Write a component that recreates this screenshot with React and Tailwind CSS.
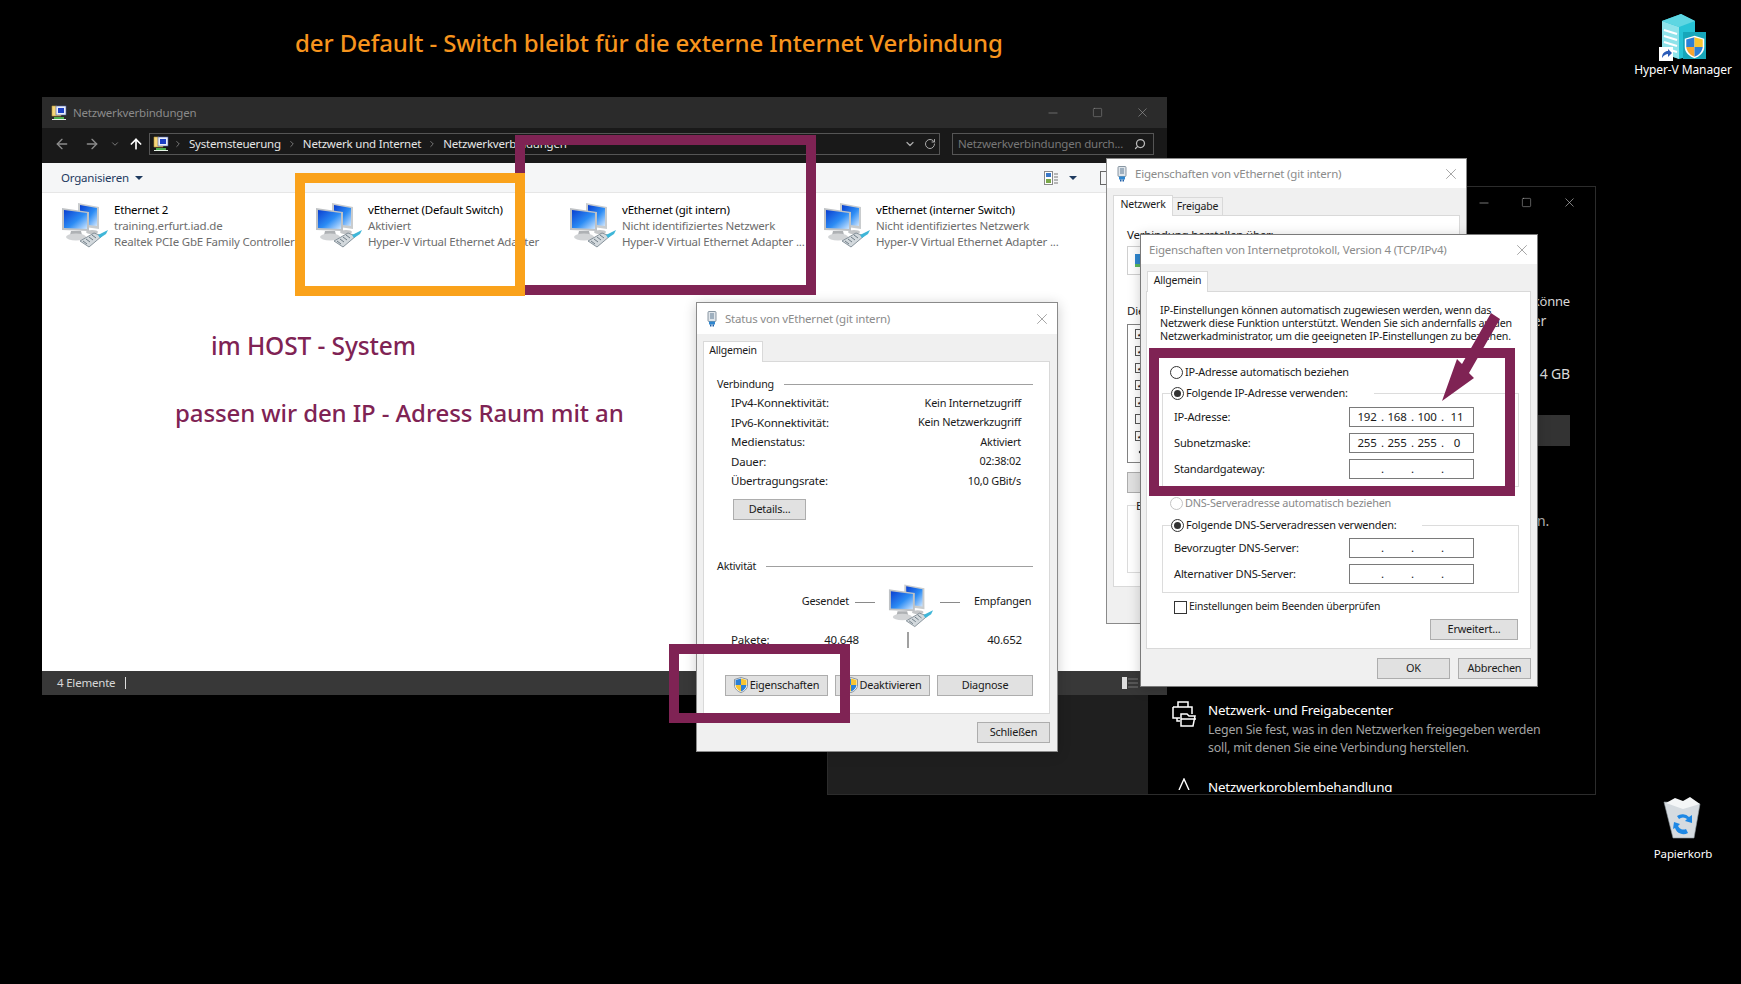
import { ArrowLeft, ArrowRight, ArrowUp, ChevronDown, ChevronLeft, ChevronRight, Minus, RotateCw, Search, Square, X } from "lucide-react";

function NetIcon({ className }) {
  return (
    <svg viewBox="0 0 48 46" className={className}>
      <defs>
        <linearGradient id="scr" x1="0" y1="0" x2="1" y2="1">
          <stop offset="0" stopColor="#0a3fd0" />
          <stop offset="0.55" stopColor="#2c8cf4" />
          <stop offset="1" stopColor="#cfe6ff" />
        </linearGradient>
      </defs>
      <path d="M17 1 L38 5 L38 27 L17 24 Z" fill="#c9ccce" />
      <path d="M19 3 L36 6 L36 24 L19 22 Z" fill="url(#scr)" />
      <ellipse cx="31" cy="30" rx="6" ry="2" fill="#c4c6c8" />
      <path d="M1 6 L28 10 L28 29 L1 28 Z" fill="#bfc2c5" />
      <path d="M3 8 L26 11 L26 27 L3 26 Z" fill="url(#scr)" />
      <path d="M10 29 L20 29 L21 33 L9 33 Z" fill="#aeb1b4" />
      <ellipse cx="15" cy="35" rx="10" ry="3.5" fill="#d2d4d6" />
      <path d="M19 39 L33 31 L41 34 L28 45 Z" fill="#d3d9dd" stroke="#6f7c86" strokeWidth="0.8" />
      <path d="M22 39 L26 42 M25 37 L29 40 M28 35 L32 38 M31 33 L35 36" stroke="#6f7c86" strokeWidth="1" />
      <path d="M37 33 L47 28 L45 32 L39 36 Z" fill="#3fb6d8" />
    </svg>
  );
}

function FolderNet({ className }) {
  return (
    <svg viewBox="0 0 16 16" className={className}>
      <path d="M1 1 H6 L7 3 H10 V11 H1 Z" fill="#f5d67a" stroke="#b89a3e" strokeWidth="0.6" />
      <rect x="5" y="1" width="10" height="9" fill="#e8eefc" stroke="#4a5a9c" strokeWidth="0.6" />
      <rect x="7" y="3" width="6" height="5" fill="#1c3fc4" />
      <path d="M3 12 H13 V14 H3 Z" fill="#4fb04f" />
      <path d="M1 14 H15 V15 H1 Z" fill="#e8f3e8" />
    </svg>
  );
}

function Plug({ className }) {
  return (
    <svg viewBox="0 0 10 16" className={className}>
      <rect x="1" y="0.5" width="8" height="10" rx="1" fill="#dfe5ea" stroke="#6f7f8e" strokeWidth="0.8" />
      <rect x="3" y="2" width="4" height="6" fill="#9fb0bf" />
      <rect x="2" y="10.5" width="6" height="3" fill="#2f87d0" />
      <rect x="3" y="13.5" width="1.5" height="2" fill="#1f5fa8" />
      <rect x="5.5" y="13.5" width="1.5" height="2" fill="#1f5fa8" />
    </svg>
  );
}

function Shield({ className }) {
  return (
    <svg viewBox="0 0 14 16" className={className}>
      <path d="M7 0.5 L13.5 2.5 V8 C13.5 12 10 14.5 7 15.5 C4 14.5 0.5 12 0.5 8 V2.5 Z" fill="#fff" stroke="#5d6b78" strokeWidth="0.7" />
      <path d="M7 1.5 V8 H1.5 V3 Z" fill="#2b7fd6" />
      <path d="M7 1.5 L12.5 3 V8 H7 Z" fill="#f7c531" />
      <path d="M1.5 8 H7 V14.5 C4 13.5 2 11 1.5 8 Z" fill="#f7c531" />
      <path d="M7 8 H12.5 C12 11 10 13.5 7 14.5 Z" fill="#2b7fd6" />
    </svg>
  );
}

function Btn({ className = "", children }) {
  return (
    <div className={`flex h-[21px] items-center justify-center border border-[#adadad] bg-[#e1e1e1] text-[10.9px] text-[#1a1a1a] ${className}`}>
      {children}
    </div>
  );
}

function Tab({ className = "", children }) {
  return (
    <div className={`z-10 -mb-px flex items-center justify-center border border-b-0 border-[#d9d9d9] bg-white text-[10.5px] text-[#1a1a1a] ${className}`}>
      {children}
    </div>
  );
}

function TitleBar({ icon, title, className = "h-[31px]", titleClass = "" }) {
  return (
    <div className={`flex shrink-0 items-center bg-white pr-[6px] pl-[10px] ${className}`}>
      {icon}
      <span className={`text-[#8b8b8b] ${titleClass}`}>{title}</span>
      <X className="ml-auto text-[#8a8a8a]" size={18} strokeWidth={1} />
    </div>
  );
}

function Section({ label }) {
  return (
    <div className="flex h-[18px] items-center gap-[10px] text-[10.7px] text-[#1a1a1a]">
      {label}
      <div className="h-px flex-1 bg-[#a0a0a0]" />
    </div>
  );
}

function Row({ label, value }) {
  return (
    <div className="flex h-[19.5px] items-center justify-between text-[#1a1a1a]">
      <span>{label}</span>
      <span className="text-[10.9px]">{value}</span>
    </div>
  );
}

function Radio({ on, off, label }) {
  return (
    <div className={`flex h-[14px] items-center gap-[2px] bg-white text-[10.9px] ${off ? "text-[#8a8a8a]" : "text-[#1a1a1a]"}`}>
      <div className={`flex size-[13px] items-center justify-center rounded-full border ${off ? "border-[#c4c4c4]" : "border-[#333]"}`}>
        {on && <div className="size-[7px] rounded-full bg-[#333]" />}
      </div>
      {label}
    </div>
  );
}

function IpField({ label, parts = ["", "", "", ""] }) {
  return (
    <div className="flex h-[20px] items-center text-[#1a1a1a]">
      <span className="w-[186px] pl-[11px] text-[11.1px]">{label}</span>
      <div className="flex h-[20px] w-[125px] items-center border border-[#7a7a7a] bg-white pl-[3px]">
        {parts.map((p, i) => (
          <div key={i} className="flex w-[30px]">
            <span className="w-[28px] text-center">{p}</span>
            {i < 3 && <span className="w-[2px]">.</span>}
          </div>
        ))}
      </div>
    </div>
  );
}

function GroupBox({ className = "", legend, children }) {
  return (
    <div className={`relative ml-[15px] w-[357px] border border-[#dcdcdc] ${className}`}>
      <div className="absolute -top-[8px] left-[8px] bg-white pr-[26px]">{legend}</div>
      {children}
    </div>
  );
}

function SettingsWindow() {
  return (
    <div className="absolute top-[186px] left-[827px] flex h-[609px] w-[769px] border border-[#2c2c2c] bg-black text-white">
      <div className="w-[320px] bg-[#1f1f1f]" />
      <div className="flex flex-1 flex-col">
        <div className="flex h-[31px] items-center justify-end gap-[30px] pr-[18px] text-[#c8c8c8]">
          <Minus size={14} strokeWidth={1} />
          <Square size={11} strokeWidth={1} />
          <X size={15} strokeWidth={1} />
        </div>
        <div className="flex w-[422px] flex-col items-end text-[14px] text-[#d8d8d8]">
          <div className="mt-[74px] text-[13px] leading-[19px]">könne</div>
          <div className="mr-[24px] leading-[19px]">er</div>
          <div className="mt-[34px] leading-[19px]">4 GB</div>
          <div className="mt-[32px] h-[31px] w-[60px] bg-[#333333]" />
          <div className="mt-[65px] mr-[21px] leading-[19px] text-[#b5b5b5]">n.</div>
        </div>
        <div className="mt-[171px] flex gap-[12px] pl-[24px]">
          <svg viewBox="0 0 24 26" className="h-[26px] w-[24px] shrink-0" fill="none" stroke="#fff" strokeWidth="1.5">
            <path d="M6 6 V1 H16 V6 M1 6 H20 V13 M1 6 V17 H8 M5 17 V20 H8 M9 13 H15 L17 15 H23 L21 25 H9 Z M9 18 H24" />
          </svg>
          <div>
            <div className="text-[13.4px] leading-[18px]">Netzwerk- und Freigabecenter</div>
            <div className="mt-[2px] w-[345px] text-[12.4px] leading-[18px] text-[#a3a3a3]">
              Legen Sie fest, was in den Netzwerken freigegeben werden soll, mit denen Sie eine Verbindung herstellen.
            </div>
          </div>
        </div>
        <div className="mt-[21px] flex h-[14px] gap-[18px] overflow-hidden pl-[30px] text-[13.4px] leading-[18px]">
          <svg viewBox="0 0 12 12" className="size-[12px] shrink-0" fill="none" stroke="#fff" strokeWidth="1.4">
            <path d="M1 12 L6 1 L11 12" />
          </svg>
          Netzwerkproblembehandlung
        </div>
      </div>
    </div>
  );
}

const adapters = [
  ["Ethernet 2", "training.erfurt.iad.de", "Realtek PCIe GbE Family Controller"],
  ["vEthernet (Default Switch)", "Aktiviert", "Hyper-V Virtual Ethernet Adapter"],
  ["vEthernet (git intern)", "Nicht identifiziertes Netzwerk", "Hyper-V Virtual Ethernet Adapter ..."],
  ["vEthernet (interner Switch)", "Nicht identifiziertes Netzwerk", "Hyper-V Virtual Ethernet Adapter ..."],
];

function Explorer() {
  return (
    <div className="absolute top-[97px] left-[42px] flex h-[598px] w-[1125px] flex-col bg-white">
      <div className="flex h-[31px] items-center bg-[#2b2b2b] pr-[17px] pl-[9px] text-[#8a8a8a]">
        <FolderNet className="mr-[6px] size-[16px]" />
        Netzwerkverbindungen
        <div className="ml-auto flex items-center gap-[32px] text-[#9a9a9a]">
          <Minus size={14} strokeWidth={1} />
          <Square size={11} strokeWidth={1} />
          <X size={15} strokeWidth={1} />
        </div>
      </div>
      <div className="flex h-[35px] items-center bg-[#191919] pr-[13px] pb-[3px]">
        <div className="flex w-[107px] items-center pl-[12px] text-[#8c8c8c]">
          <ArrowLeft size={16} strokeWidth={2} />
          <ArrowRight className="ml-[14px]" size={16} strokeWidth={2} />
          <ChevronDown className="ml-[10px]" size={10} strokeWidth={2} />
          <ArrowUp className="ml-[8px] text-white" size={16} strokeWidth={2.5} />
        </div>
        <div className="flex h-[22px] w-[791px] items-center border border-[#555] pr-[3px] pl-[3px] text-[#e6e6e6]">
          <FolderNet className="size-[16px]" />
          <ChevronRight className="mr-[6px] ml-[4px] text-[#888]" size={10} />
          Systemsteuerung
          <ChevronRight className="mx-[6px] text-[#888]" size={10} />
          Netzwerk und Internet
          <ChevronRight className="mx-[6px] text-[#888]" size={10} />
          Netzwerkverbindungen
          <ChevronDown className="ml-auto text-[#aaa]" size={12} strokeWidth={2.5} />
          <RotateCw className="ml-[8px] text-[#aaa]" size={12} />
        </div>
        <div className="ml-[12px] flex h-[22px] flex-1 items-center justify-between border border-[#555] pr-[7px] pl-[5px] text-[#777]">
          Netzwerkverbindungen durch...
          <Search className="-scale-x-100 text-[#bbb]" size={12} strokeWidth={2.5} />
        </div>
      </div>
      <div className="flex h-[30px] items-center border-b border-[#e6e6e6] bg-[#f5f6f7] pr-[53px] pl-[19px] text-[#1e3a5f]">
        Organisieren
        <div className="ml-[6px] size-0 border-x-[4px] border-t-[4px] border-x-transparent border-t-[#1e3a5f]" />
        <svg viewBox="0 0 14 14" className="ml-auto size-[14px]">
          <rect x="0.5" y="0.5" width="8" height="13" fill="#fff" stroke="#8a8a8a" />
          <rect x="2" y="2" width="5" height="4" fill="#3a78c8" />
          <rect x="2" y="8" width="5" height="4" fill="#7aa84a" />
          <path d="M10 3 H14 M10 6 H14 M10 9 H14 M10 12 H14" stroke="#777" />
        </svg>
        <div className="ml-[11px] size-0 border-x-[4px] border-t-[4px] border-x-transparent border-t-[#1e3a5f]" />
        <div className="ml-[23px] h-[14px] w-[14px] border border-[#666]" />
      </div>
      <div className="grid flex-1 grid-cols-[repeat(4,254px)] content-start pt-[9px] pl-[19px]">
        {adapters.map(([name, sub, dev]) => (
          <div key={name} className="flex">
            <NetIcon className="h-[46px] w-[48px] shrink-0" />
            <div className="ml-[5px] whitespace-nowrap leading-[16px] text-[#6d6d6d]">
              <div className="text-black">{name}</div>
              <div>{sub}</div>
              <div>{dev}</div>
            </div>
          </div>
        ))}
      </div>
      <div className="flex h-[24px] items-center bg-[#383838] pr-[29px] pl-[15px] text-[#d8d8d8]">
        4 Elemente
        <div className="ml-[10px] h-[12px] w-px bg-[#ddd]" />
        <svg viewBox="0 0 16 12" className="ml-auto h-[12px] w-[16px]">
          <rect x="0" y="0" width="5" height="12" fill="#ddd" />
          <path d="M6 2 H16 M6 6 H16 M6 10 H16" stroke="#777" />
        </svg>
      </div>
    </div>
  );
}

function PropsWindow() {
  return (
    <div className="absolute top-[158px] left-[1106px] flex h-[466px] w-[361px] flex-col border border-[#8a8a8a] bg-[#f0f0f0]">
      <TitleBar className="h-[29px]" icon={<Plug className="mr-[8px] h-[16px] w-[10px]" />} title="Eigenschaften von vEthernet (git intern)" />
      <div className="flex h-[27px] items-end pl-[6px]">
        <Tab className="h-[21px] w-[60px] pb-[3px]">Netzwerk</Tab>
        <div className="flex h-[18px] w-[50px] items-center justify-center border border-b-0 border-l-0 border-[#d9d9d9] text-[10.5px] text-[#1a1a1a]">Freigabe</div>
      </div>
      <div className="mx-[6px] h-[372px] border border-[#d9d9d9] bg-white px-[13px] text-[#1a1a1a]">
        <div className="mt-[11px] leading-[16px]">Verbindung herstellen über:</div>
        <div className="mt-[3px] flex h-[29px] w-[300px] items-center border border-[#d0d0d0] pl-[6px]">
          <svg viewBox="0 0 16 16" className="size-[16px]">
            <rect x="1" y="1" width="12" height="10" fill="#2f87d0" />
            <rect x="1" y="11" width="14" height="3" fill="#5cb85c" />
          </svg>
        </div>
        <div className="mt-[28px] leading-[16px]">Diese Verbindung verwendet folgende Elemente:</div>
        <div className="mt-[5px] flex h-[139px] w-[318px] flex-col gap-[7px] border border-[#828282] pt-[4px] pl-[7px]">
          {[1, 1, 1, 1, 1, 0, 1].map((on, i) => (
            <div key={i} className="flex size-[10px] items-center justify-center border border-[#555] text-[8px] leading-none font-bold">
              {on ? "✓" : ""}
            </div>
          ))}
          <ChevronLeft className="-mt-[2px]" size={12} strokeWidth={3} />
        </div>
        <Btn className="mt-[9px] w-[110px]">Installieren...</Btn>
        <div className="mt-[12px] h-[68px] w-[320px] border border-[#dcdcdc] pl-[8px]">
          <span className="relative -top-[9px] bg-white">Beschreibung</span>
        </div>
      </div>
    </div>
  );
}

function StatusDialog() {
  return (
    <div className="absolute top-[302px] left-[696px] flex h-[450px] w-[362px] flex-col border border-[#8a8a8a] bg-[#f0f0f0] shadow-[0_2px_12px_rgba(0,0,0,0.2)]">
      <TitleBar icon={<Plug className="mr-[8px] h-[16px] w-[10px]" />} title="Status von vEthernet (git intern)" />
      <div className="flex h-[27px] items-end pl-[6px]">
        <Tab className="h-[21px] w-[60px] pb-[3px]">Allgemein</Tab>
      </div>
      <div className="mx-[6px] h-[353px] w-[347px] border border-[#d9d9d9] bg-white pt-[13px] pr-[16px] pl-[13px] text-[#1a1a1a]">
        <Section label="Verbindung" />
        <div className="mr-[12px] ml-[14px]">
          <Row label="IPv4-Konnektivität:" value="Kein Internetzugriff" />
          <Row label="IPv6-Konnektivität:" value="Kein Netzwerkzugriff" />
          <Row label="Medienstatus:" value="Aktiviert" />
          <Row label="Dauer:" value="02:38:02" />
          <Row label="Übertragungsrate:" value="10,0 GBit/s" />
        </div>
        <Btn className="mt-[8px] ml-[16px] w-[73px]">Details...</Btn>
        <div className="mt-[38px]">
          <Section label="Aktivität" />
        </div>
        <div className="mt-[7px] flex h-[45px] items-start text-[10.9px]">
          <div className="mt-[10px] w-[132px] text-right leading-[16px]">Gesendet</div>
          <div className="mt-[19px] ml-[6px] h-px w-[20px] bg-[#8a8a8a]" />
          <NetIcon className="mr-[6px] ml-[13px] h-[45px] w-[46px]" />
          <div className="mt-[19px] h-px w-[20px] bg-[#8a8a8a]" />
          <div className="mt-[10px] ml-[14px] leading-[16px]">Empfangen</div>
        </div>
        <div className="mt-[4px] flex h-[16px] items-center">
          <div className="ml-[14px] flex w-[128px] justify-between">
            <span>Pakete:</span>
            <span>40.648</span>
          </div>
          <div className="ml-[48px] h-[16px] w-[2px] bg-[#a0a0a0]" />
          <div className="w-[113px] text-right">40.652</div>
        </div>
        <div className="mt-[27px] ml-[8px] flex gap-[7px]">
          <Btn className="w-[103px] gap-[2px]">
            <Shield className="h-[16px] w-[14px]" />
            Eigenschaften
          </Btn>
          <Btn className="w-[95px] gap-[2px]">
            <Shield className="h-[16px] w-[14px]" />
            Deaktivieren
          </Btn>
          <Btn className="w-[96px]">Diagnose</Btn>
        </div>
      </div>
      <div className="mt-[8px] mr-[7px] flex justify-end">
        <Btn className="w-[73px]">Schließen</Btn>
      </div>
    </div>
  );
}

function Ipv4Dialog() {
  return (
    <div className="absolute top-[234px] left-[1140px] flex h-[453px] w-[398px] flex-col border border-[#7a7a7a] bg-[#f0f0f0] shadow-[0_2px_12px_rgba(0,0,0,0.2)]">
      <TitleBar className="h-[29px]" title="Eigenschaften von Internetprotokoll, Version 4 (TCP/IPv4)" titleClass="-ml-[2px]" />
      <div className="flex h-[27px] items-end pl-[6px]">
        <Tab className="h-[21px] w-[61px] pb-[2px]">Allgemein</Tab>
      </div>
      <div className="mx-[5px] h-[358px] w-[385px] border border-[#d9d9d9] bg-white text-[#1a1a1a]">
        <div className="whitespace-nowrap pt-[12px] pl-[13px] text-[10.7px] leading-[13px]">
          <div>IP-Einstellungen können automatisch zugewiesen werden, wenn das</div>
          <div>Netzwerk diese Funktion unterstützt. Wenden Sie sich andernfalls an den</div>
          <div>Netzwerkadministrator, um die geeigneten IP-Einstellungen zu beziehen.</div>
        </div>
        <div className="mt-[22px] ml-[23px] w-fit">
          <Radio label="IP-Adresse automatisch beziehen" />
        </div>
        <GroupBox className="mt-[14px] flex flex-col gap-[6px] pt-[13px] pb-[7px]" legend={<Radio on label="Folgende IP-Adresse verwenden:" />}>
          <IpField label="IP-Adresse:" parts={["192", "168", "100", "11"]} />
          <IpField label="Subnetzmaske:" parts={["255", "255", "255", "0"]} />
          <IpField label="Standardgateway:" />
        </GroupBox>
        <div className="mt-[9px] ml-[23px] w-fit">
          <Radio off label="DNS-Serveradresse automatisch beziehen" />
        </div>
        <GroupBox className="mt-[15px] flex flex-col gap-[6px] pt-[12px] pb-[8px]" legend={<Radio on label="Folgende DNS-Serveradressen verwenden:" />}>
          <IpField label="Bevorzugter DNS-Server:" />
          <IpField label="Alternativer DNS-Server:" />
        </GroupBox>
        <div className="mt-[7px] ml-[27px] flex h-[14px] items-center gap-[2px] text-[10.4px]">
          <div className="size-[13px] border border-[#333]" />
          Einstellungen beim Beenden überprüfen
        </div>
        <div className="mt-[5px] mr-[12px] flex justify-end">
          <Btn className="w-[88px]">Erweitert...</Btn>
        </div>
      </div>
      <div className="mt-[9px] mr-[6px] flex justify-end gap-[8px]">
        <Btn className="w-[73px]">OK</Btn>
        <Btn className="w-[73px]">Abbrechen</Btn>
      </div>
    </div>
  );
}

function HyperVIcon() {
  return (
    <svg viewBox="0 0 48 48" className="size-[48px]">
      <path d="M3 8 L22 1 L36 8 L36 42 L20 46 L3 40 Z" fill="#27c3d6" />
      <path d="M3 8 L20 14 L20 46 L3 40 Z" fill="#8fe3ea" />
      <path d="M3 8 L22 1 L36 8 L20 14 Z" fill="#5ed6e2" />
      <path d="M5 17 L18 21 M5 23 L18 27 M5 29 L18 33 M5 35 L18 39" stroke="#fff" strokeWidth="2" />
      <rect x="24" y="19" width="23" height="27" fill="#17a6ba" />
      <g transform="translate(25 22) scale(1.5)">
        <path d="M7 0.5 L13.5 2.5 V8 C13.5 12 10 14.5 7 15.5 C4 14.5 0.5 12 0.5 8 V2.5 Z" fill="#fff" />
        <path d="M7 1.5 V8 H1.5 V3 Z" fill="#2b7fd6" />
        <path d="M7 1.5 L12.5 3 V8 H7 Z" fill="#f7c531" />
        <path d="M1.5 8 H7 V14.5 C4 13.5 2 11 1.5 8 Z" fill="#f7a531" />
        <path d="M7 8 H12.5 C12 11 10 13.5 7 14.5 Z" fill="#2b7fd6" />
      </g>
      <rect x="0" y="34" width="14" height="14" fill="#fff" />
      <path d="M3 45 C3 40 6 38 9 38 L9 36 L13 40 L9 44 L9 41 C7 41 5 42 3 45 Z" fill="#2a5bb8" />
    </svg>
  );
}

function BinIcon() {
  return (
    <svg viewBox="0 0 40 44" className="h-[44px] w-[40px]">
      <path d="M1 6 L37 8 L31 42 L10 42 Z" fill="#d5dbe0" stroke="#8e989f" strokeWidth="0.6" />
      <path d="M3 7 L12 2 L20 5 L27 1 L37 8 L20 13 Z" fill="#f4f6f7" />
      <path d="M14 20 A9 9 0 0 1 26 21 L29 19 L29 27 L22 25 L24 23 A6 6 0 0 0 16 23 Z" fill="#1e88e5" />
      <path d="M11 26 L17 28 L15 30 A6 6 0 0 0 23 33 L25 37 A9 9 0 0 1 12 32 L10 33 Z" fill="#1e88e5" />
    </svg>
  );
}

function DesktopIcon({ className, icon, label, labelClass = "" }) {
  return (
    <div className={`absolute flex w-[100px] flex-col items-center text-[12px] tracking-[-0.1px] text-white ${className}`}>
      {icon}
      <span className={`mt-[1px] leading-[16px] ${labelClass}`}>{label}</span>
    </div>
  );
}

export default function App() {
  return (
    <div className="relative h-[984px] w-[1741px] overflow-hidden bg-black font-['Noto_Sans','Open_Sans',sans-serif] text-[11.5px] tracking-[-0.2px]">
      <SettingsWindow />
      <Explorer />
      <PropsWindow />
      <StatusDialog />
      <Ipv4Dialog />

      <div className="absolute top-[135px] left-[515px] h-[160px] w-[301px] border-[10px] border-[#7f2354]" />
      <div className="absolute top-[173px] left-[295px] h-[123px] w-[230px] border-[10px] border-[#faa21b]" />
      <div className="absolute top-[644px] left-[669px] h-[79px] w-[181px] border-[10px] border-[#7f2354]" />
      <div className="absolute top-[348px] left-[1149px] h-[148px] w-[366px] border-[10px] border-[#7f2354]" />
      <svg className="absolute top-[310px] left-[1440px] h-[95px] w-[65px]" viewBox="1440 310 65 95">
        <path d="M1442 401 L1457 359 L1462 364 L1491 313 L1500 319 L1469 373 L1474 378 Z" fill="#7f2354" />
      </svg>

      <div className="absolute top-[24px] left-[295px] text-[24px] leading-[38px] font-medium tracking-[-0.1px] text-[#f7941d]">
        der Default - Switch bleibt für die externe Internet Verbindung
      </div>
      <div className="absolute top-[328px] left-[211px] text-[24.5px] leading-[36px] font-medium tracking-[-0.1px] text-[#7f2354]">im HOST - System</div>
      <div className="absolute top-[395px] left-[175px] text-[24px] leading-[36px] font-medium tracking-[-0.1px] text-[#7f2354]">passen wir den IP - Adress Raum mit an</div>

      <DesktopIcon className="top-[13px] left-[1633px]" icon={<HyperVIcon />} label="Hyper-V Manager" />
      <DesktopIcon className="top-[796px] left-[1633px]" icon={<BinIcon />} label="Papierkorb" labelClass="mt-[6px] text-[11.5px]" />
    </div>
  );
}
